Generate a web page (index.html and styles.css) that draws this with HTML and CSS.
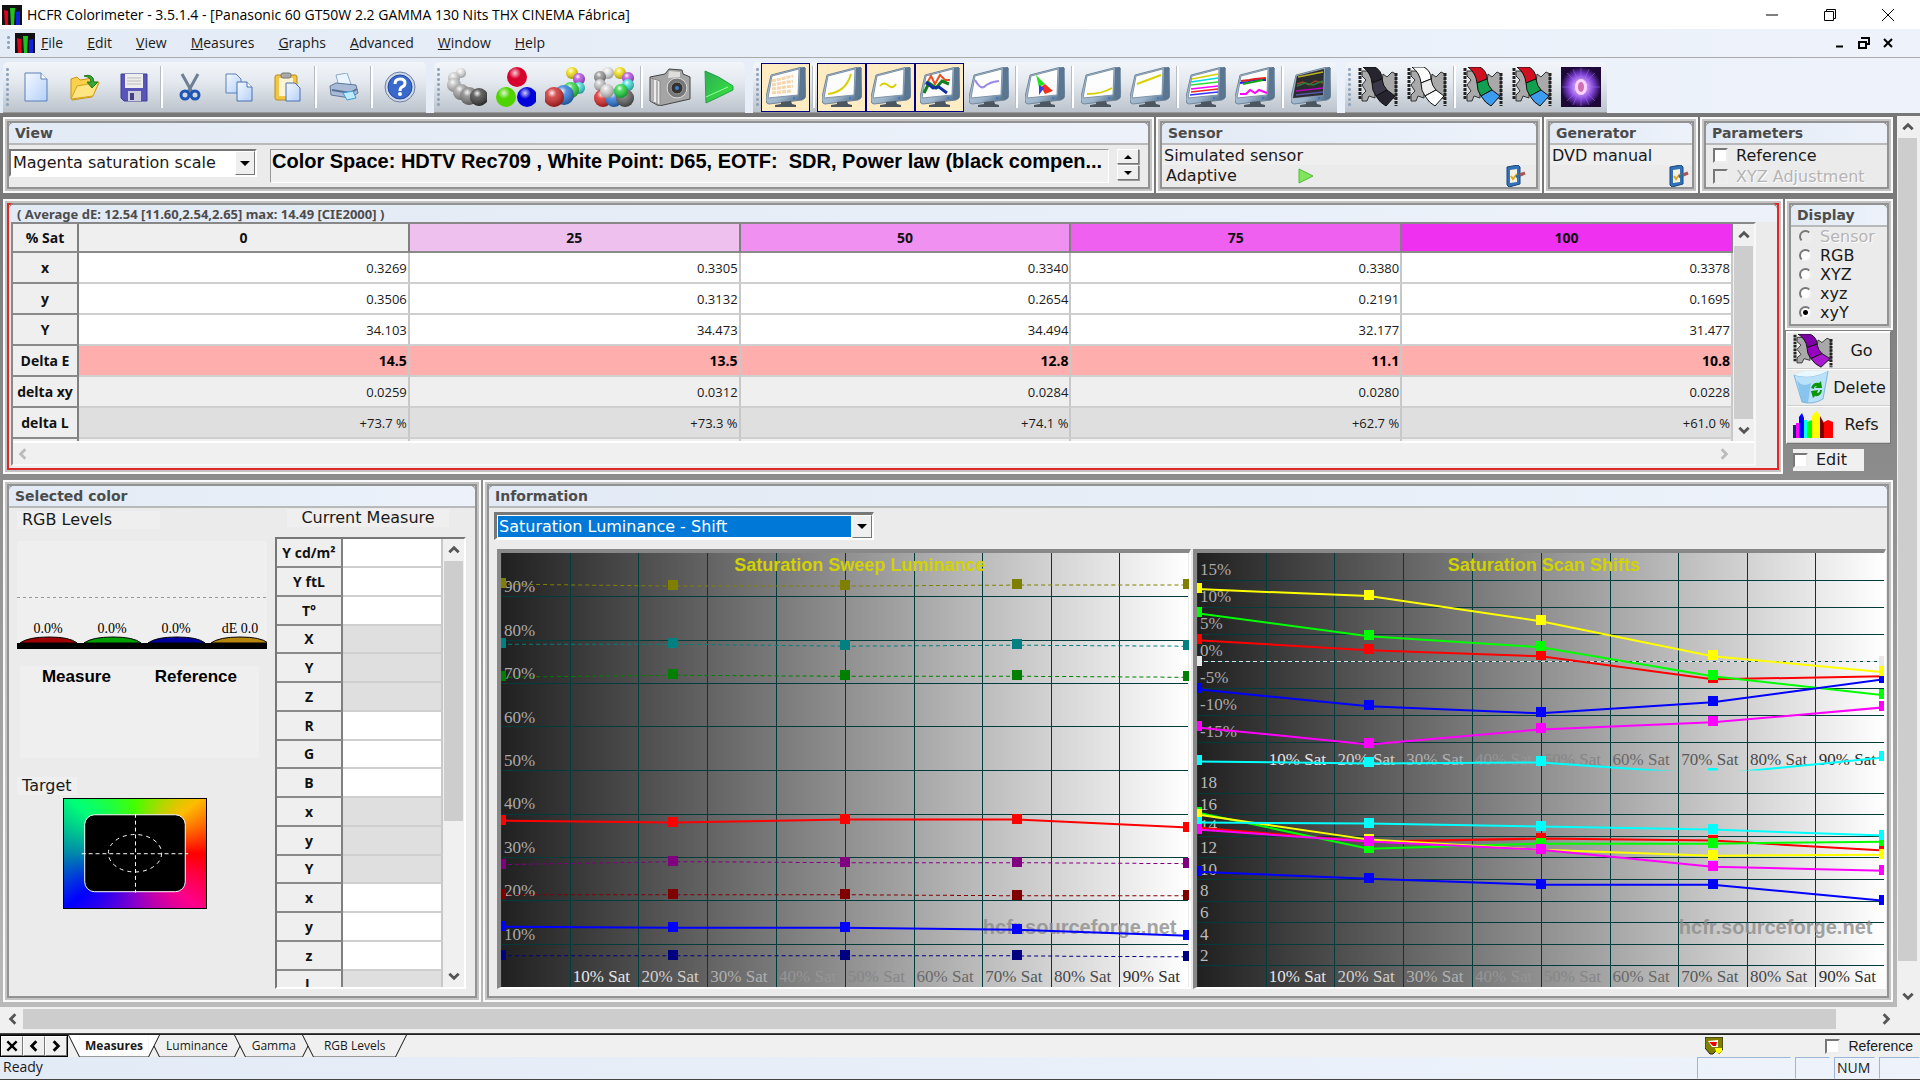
FILE: index.html
```html
<!DOCTYPE html>
<html lang="en">
<head>
    <meta charset="utf-8">
    <title>HCFR Colorimeter</title>
    <meta name="viewport" content="width=device-width, initial-scale=1">
    <link rel="stylesheet" href="styles.css">
</head>
<body>
    <svg class="defs" width="0" height="0" aria-hidden="true">
        <defs>
            <linearGradient id="gPage" x1="0" y1="0" x2="1" y2="1"><stop offset="0" stop-color="#f4f9ff"/><stop offset="1" stop-color="#b4d0fa"/></linearGradient>
            <linearGradient id="gFrame" x1="0" y1="0" x2="1" y2="1"><stop offset="0" stop-color="#c3d0dc"/><stop offset=".6" stop-color="#9db4ca"/><stop offset="1" stop-color="#33526f"/></linearGradient>
            <linearGradient id="gPlay" x1="0" y1="0" x2="1" y2="1"><stop offset="0" stop-color="#2fae55"/><stop offset="1" stop-color="#35e83c"/></linearGradient>
            <linearGradient id="gGray"><stop offset="0" stop-color="#202020"/><stop offset="1" stop-color="#fff"/></linearGradient>
            <radialGradient id="shine" cx=".4" cy=".3" r=".75"><stop offset="0" stop-color="#fff" stop-opacity=".95"/><stop offset=".3" stop-color="#fff" stop-opacity=".25"/><stop offset="1" stop-color="#000" stop-opacity=".35"/></radialGradient>
            <radialGradient id="shineFlat" cx=".4" cy=".3" r=".3"><stop offset="0" stop-color="#fff" stop-opacity=".8"/><stop offset="1" stop-color="#fff" stop-opacity="0"/></radialGradient>
            <radialGradient id="gStar"><stop offset="0" stop-color="#fff"/><stop offset=".25" stop-color="#d9a8ff"/><stop offset=".65" stop-color="#7a3fd0"/><stop offset="1" stop-color="#1d0838"/></radialGradient>
        </defs>
        <symbol id="logo" viewBox="0 0 20 20">
            <rect width="20" height="20" fill="#111"/>
            <path d="M2 5l4 1v14H3z" fill="#e00020"/><path d="M8 3h5l-1 17H9z" fill="#1ec41e"/><path d="M14 7l4-1v14h-4z" fill="#1020e0"/>
        </symbol>
        <symbol id="monitor" viewBox="0 0 40 40">
            <path d="M5 8L36 0q4 0 4 3v24q0 5-4 6L3 37q-3 0-3-4v-3z" fill="url(#gFrame)" stroke="#71879b"/>
            <path d="M6 9l27-7-1 26-30 3z" fill="#fdfdfd" stroke="#7f94a8"/>
            <path d="M34 1l5-1v28l-6 3z" fill="#5a7690"/>
            <circle cx="28" cy="31" r="1" fill="#2b6fd0"/>
            <path d="M15 35l10-1 1 3 4 1v2H9v-2l6-1z" fill="#4c5660"/>
        </symbol>
        <symbol id="film" viewBox="0 0 40 40">
            <path d="M4 4h6l2 4 5-2v9l4 3-4 4v9l-6-2-2 5H4v-6l4-4-4-6 4-5-4-4zM25 7l4 3 5-5 4 2v25l-6-2-4 4-4-5 3-7-3-6z" fill="#a9a9a9" stroke="#333"/>
            <path d="M2 1v32M38 6v33" stroke="#222" stroke-width="3" stroke-dasharray="3 1"/>
            <path class="f1" d="M5 0h12q7 4 7 12l-10 4Q13 6 5 0z" stroke="#111"/>
            <path class="f2" d="M14 16l10-4q1 7 5 11l-11 6q-4-5-4-13z" stroke="#111"/>
            <path class="f3" d="M18 29l11-6 8 6-9 10q-6-3-10-10z" stroke="#111"/>
        </symbol>
        <symbol id="props" viewBox="0 0 22 22">
            <path d="M2 2l11-2 2 2v17l-11 3-2-2z" fill="#3172b8" stroke="#1b4478"/><path d="M5 5l7-1v13l-7 1z" fill="#f6f2dd"/>
            <path d="M6 11l2 3 4-5" fill="none" stroke="#e2a723" stroke-width="2"/><path d="M11 12l6-3" stroke="#2d6aa8" stroke-width="3"/><path d="M15 10l5-2" stroke="#a55" stroke-width="3"/>
        </symbol>
        <symbol id="up" viewBox="0 0 12 12"><path d="M2 8l4-4 4 4" fill="none" stroke="currentColor" stroke-width="2.4"/></symbol>
        <symbol id="down" viewBox="0 0 12 12"><path d="M2 4l4 4 4-4" fill="none" stroke="currentColor" stroke-width="2.4"/></symbol>
        <symbol id="left" viewBox="0 0 12 12"><path d="M8 2L4 6l4 4" fill="none" stroke="currentColor" stroke-width="2.4"/></symbol>
        <symbol id="right" viewBox="0 0 12 12"><path d="M4 2l4 4-4 4" fill="none" stroke="currentColor" stroke-width="2.4"/></symbol>
    </svg>

    <header class="titlebar">
        <svg class="logo"><use href="#logo"/></svg>
        <span class="title">HCFR Colorimeter - 3.5.1.4 - [Panasonic 60 GT50W 2.2 GAMMA 130 Nits THX CINEMA Fábrica]</span>
        <button aria-label="Minimize"><svg width="12" height="12" viewBox="0 0 12 12"><path d="M0 6h12" stroke="#000"/></svg></button>
        <button aria-label="Restore"><svg width="12" height="12" viewBox="0 0 12 12"><path d="M.5 2.5h9v9h-9zM2.500 2V.5h9v9H10" fill="none" stroke="#000"/></svg></button>
        <button aria-label="Close"><svg width="12" height="12" viewBox="0 0 12 12"><path d="M0 0l12 12M12 0L0 12" stroke="#000"/></svg></button>
    </header>

    <nav class="menubar">
        <i class="grip"></i>
        <svg class="logo"><use href="#logo"/></svg>
        <div class="menus">
            <button><u>F</u>ile</button><button><u>E</u>dit</button><button><u>V</u>iew</button><button><u>M</u>easures</button><button><u>G</u>raphs</button><button><u>A</u>dvanced</button><button><u>W</u>indow</button><button><u>H</u>elp</button>
        </div>
        <div class="mdi">
            <button aria-label="Minimize document"><svg width="10" height="10" viewBox="0 0 10 10"><path d="M1 8.500h7" stroke="#000" stroke-width="2"/></svg></button>
            <button aria-label="Restore document"><svg width="12" height="12" viewBox="0 0 12 12"><path d="M3 1h8v6H9M1 5h7v6H1z" fill="none" stroke="#000" stroke-width="2"/></svg></button>
            <button aria-label="Close document"><svg width="10" height="10" viewBox="0 0 10 10"><path d="M1 1l8 8M9 1L1 9" stroke="#000" stroke-width="2"/></svg></button>
        </div>
    </nav>

    <div class="toolbars">
        <div class="toolbar">
            <i class="grip"></i>
            <button aria-label="New"><svg width="24" height="30" viewBox="0 0 24 30"><path d="M1 1h16l6 6v22H1z" fill="url(#gPage)" stroke="#5b7fb8"/><path d="M17 1v6h6" fill="#fff" stroke="#5b7fb8"/></svg></button>
            <button aria-label="Open"><svg width="30" height="28" viewBox="0 0 30 28"><path d="M1 25V6l6-2 3 3 13-2v6l6-1-7 14-20 3z" fill="#fbd04a" stroke="#c99415"/><path d="M1 26l6-13 22-4-6 14z" fill="#ffe682" stroke="#d3a11f"/><path d="M14 3q9-3 10 6h4l-6 6-5-6h4q0-5-7-6z" fill="#37a637" stroke="#1d7a1d"/></svg></button>
            <button aria-label="Save"><svg width="28" height="29" viewBox="0 0 28 29"><path d="M1 1h26v27H4l-3-3z" fill="#5955b8" stroke="#3f3c91"/><path d="M5 1h18v14H5z" fill="#eee"/><path d="M7 5h14M7 8h14M7 11h14" stroke="#bbb"/><path d="M8 18h13v10H8z" fill="#ccd"/><path d="M10 20h4v7h-4z" fill="#444086"/></svg></button>
            <i class="sep"></i>
            <button aria-label="Cut"><svg width="22" height="28" viewBox="0 0 22 28"><path d="M3 1l10 18M19 1L9 19" stroke="#6f7f93" stroke-width="3"/><circle cx="6" cy="22" r="4" fill="none" stroke="#1e56b8" stroke-width="3"/><circle cx="16" cy="22" r="4" fill="none" stroke="#1e56b8" stroke-width="3"/></svg></button>
            <button aria-label="Copy"><svg width="28" height="29" viewBox="0 0 28 29"><path d="M1 1h10l5 5v14H1z" fill="url(#gPage)" stroke="#5b7fb8"/><path d="M12 9h10l5 5v14H12z" fill="url(#gPage)" stroke="#4a70b0"/><path d="M22 9v5h5" fill="#fff" stroke="#4a70b0"/></svg></button>
            <button aria-label="Paste"><svg width="28" height="30" viewBox="0 0 28 30"><rect x="1" y="3" width="22" height="25" rx="2" fill="#f2c545" stroke="#b98a1a"/><path d="M5 6h14v18H5z" fill="#fdf4d4"/><rect x="7" y="1" width="10" height="5" rx="2" fill="#aaa" stroke="#777"/><path d="M12 11h9l5 5v13H12z" fill="url(#gPage)" stroke="#4a70b0"/></svg></button>
            <i class="sep"></i>
            <button aria-label="Print"><svg width="30" height="28" viewBox="0 0 30 28"><path d="M7 2l11-2 4 11-12 3z" fill="#eaf5ff" stroke="#8fa8c8"/><path d="M1 13l6-3 20 2 2 8-8 5-19-3z" fill="#a9bbd6" stroke="#5f7699"/><path d="M3 17l18 3 7-4" fill="none" stroke="#5a6f92" stroke-width="2"/><path d="M14 20l10-2 3 7-9 2z" fill="#bdeaff" stroke="#3c9ad8"/></svg></button>
            <i class="sep"></i>
            <button aria-label="Help"><svg width="32" height="32" viewBox="0 0 32 32"><circle cx="16" cy="16" r="15" fill="#cfd8e8" stroke="#6d7fa3"/><circle cx="16" cy="16" r="12" fill="#3a69cc" stroke="#2448a0"/><path d="M11 13q0-5 5-5t5 4q0 3-3 4-2 1-2 4" fill="none" stroke="#fff" stroke-width="3"/><circle cx="16" cy="23" r="2" fill="#fff"/></svg></button>
        </div>
        <div class="toolbar">
            <i class="grip"></i>
            <button aria-label="Grayscale"><svg class="balls" data-balls="14,6,5,#ddd 7,11,6,#ccc 7,18,7,#bbb 14,25,8,#999 22,29,9,#777 32,30,9,#333" viewBox="0 0 40 40"></svg></button>
            <button aria-label="Primaries"><svg class="balls flat" data-balls="21,10,10,#d8002c 10,30,10,#4fd400 31,30,10,#0000d8" viewBox="0 0 40 40"></svg></button>
            <button aria-label="Secondaries"><svg class="balls" data-balls="27,6,6,#f5dc00 34,12,6,#b040e0 34,21,6,#30d8d8 26,23,8,#20d030 19,28,10,#2070d8 9,30,10,#c81818" viewBox="0 0 40 40"></svg></button>
            <button aria-label="All measures"><svg class="balls" data-balls="14,6,6,#ddd 26,6,6,#f5dc00 6,10,6,#888 34,11,6,#b040e0 6,18,6,#bbb 34,18,6,#30d8d8 9,31,9,#d81818 20,31,9,#2070d8 31,31,9,#555 13,24,7,#ccc 27,24,7,#10d030" viewBox="0 0 40 40"></svg></button>
            <i class="sep"></i>
            <button aria-label="Snapshot"><svg width="42" height="38" viewBox="0 0 42 38"><path d="M1 9L16 6l4-5 13 1 1 4 7 3v22l-31 7-9-5z" fill="#a5a5a5" stroke="#444"/><path d="M2 10l9 3v24l-9-4z" fill="#ececec" stroke="#888"/><path d="M4 11v22M8 13v22" stroke="#777"/><path d="M20 3l11 1v5l-12 1z" fill="#ddd"/><circle cx="28" cy="20" r="10" fill="#777" stroke="#ddd"/><circle cx="28" cy="20" r="6" fill="#333" stroke="#999"/><circle cx="28" cy="20" r="2" fill="#3c7fd0"/></svg></button>
            <button aria-label="Run"><svg width="30" height="34" viewBox="0 0 30 34"><path d="M1 1q14 5 28 15v4Q15 27 2 33z" fill="url(#gPlay)" stroke="#2a9e48"/><path d="M2 27l22-10" stroke="#9f9" /></svg></button>
        </div>
        <div class="toolbar">
            <i class="grip"></i>
            <button class="on" aria-label="Measures view"><svg viewBox="0 0 40 40"><use href="#monitor"/><path d="M6 14l21-5M6 18l21-4M6 22l21-3M6 26l20-2" stroke="#f6d6aa" stroke-width="3" stroke-dasharray="4 1"/></svg></button>
            <i class="sep"></i>
            <button class="on" aria-label="Luminance"><svg viewBox="0 0 40 40"><use href="#monitor"/><path d="M6 27q18-2 23-20" fill="none" stroke="#d8d000" stroke-width="2"/></svg></button>
            <button class="on" aria-label="Gamma"><svg viewBox="0 0 40 40"><use href="#monitor"/><path d="M9 19q4-5 9 0 4 3 7-2" fill="none" stroke="#d8d000" stroke-width="2"/></svg></button>
            <button class="on" aria-label="RGB levels"><svg viewBox="0 0 40 40"><use href="#monitor"/><path d="M6 18l5-9 4 8 5-9 5 5h5" fill="none" stroke="#f05020" stroke-width="2"/><path d="M4 26l5-10 7 5 6-7 7 3" fill="none" stroke="#108020" stroke-width="3"/><path d="M6 15l7 6 6-1 8 6" fill="none" stroke="#1030a0" stroke-width="3"/></svg></button>
            <button aria-label="Temperature"><svg viewBox="0 0 40 40"><use href="#monitor"/><path d="M6 13q5 9 9 7 5-5 15-6" fill="none" stroke="#9a8ae8" stroke-width="2"/></svg></button>
            <i class="sep"></i>
            <button aria-label="CIE diagram"><svg viewBox="0 0 40 40"><use href="#monitor"/><path d="M11 8l9 9-6 3z" fill="#20e020"/><path d="M20 17l8 7-8 3-4-7z" fill="#f03020"/><path d="M14 18l5 3-5 7z" fill="#3040f0"/></svg></button>
            <i class="sep"></i>
            <button aria-label="Near black"><svg viewBox="0 0 40 40"><use href="#monitor"/><path d="M6 27q15 0 25-6" fill="none" stroke="#d8d000" stroke-width="2"/></svg></button>
            <button aria-label="Near white"><svg viewBox="0 0 40 40"><use href="#monitor"/><path d="M7 17l24-9" fill="none" stroke="#d8d000" stroke-width="2"/></svg></button>
            <i class="sep"></i>
            <button aria-label="Saturation luminance"><svg viewBox="0 0 40 40"><use href="#monitor"/><g stroke-width="1.500"><path d="M6 12l26-5" stroke="#d8d000"/><path d="M5 15l27-4" stroke="#0dd"/><path d="M5 18l27-3" stroke="#3d3"/><path d="M5 22l27-3" stroke="#f0f"/><path d="M5 25l27-3" stroke="#e22"/><path d="M4 28l28-3" stroke="#33f"/></g></svg></button>
            <button aria-label="Saturation shift"><svg viewBox="0 0 40 40"><use href="#monitor"/><g fill="none" stroke-width="2"><path d="M5 16l8-1 4-2h14" stroke="#22e"/><path d="M6 14l8-1 6-1 11-1" stroke="#e02020"/><path d="M8 17l20-4" stroke="#1a1"/><path d="M5 27h6l4-4 5 3 4-3 8 3" stroke="#f0f"/></g></svg></button>
            <i class="sep"></i>
            <button aria-label="Measures combo"><svg viewBox="0 0 40 40"><use href="#monitor"/><path d="M6 9l27-7-1 26-30 3z" fill="#2c2c30"/><g fill="none" stroke-width="1.500"><path d="M7 10l25-5" stroke="#b8b020"/><path d="M6 17l6-2 6 3 6-4 8 2" stroke="#a04020"/><path d="M6 19l8-3 8 2 10-4" stroke="#208040"/><path d="M5 24l27-3" stroke="#b0b"/><path d="M5 28l27-3" stroke="#55a"/></g></svg></button>
        </div>
        <div class="toolbar">
            <i class="grip"></i>
            <button aria-label="Film black"><svg class="film-black" viewBox="0 0 40 40"><use href="#film"/></svg></button>
            <button aria-label="Film white"><svg class="film-white" viewBox="0 0 40 40"><use href="#film"/></svg></button>
            <i class="sep"></i>
            <button aria-label="Film primaries"><svg class="film-rgb" viewBox="0 0 40 40"><use href="#film"/></svg></button>
            <button aria-label="Film secondaries"><svg class="film-rgb" viewBox="0 0 40 40"><use href="#film"/></svg></button>
            <button aria-label="Contrast"><svg viewBox="0 0 40 40"><rect width="40" height="40" fill="#1d0838"/><circle cx="20" cy="20" r="20" fill="url(#gStar)"/><path d="M20 1v38M1 20h38M6 6l28 28M34 6L6 34M12 2l16 36M28 2L12 38" stroke="#a36bff" stroke-opacity=".5"/><ellipse cx="20" cy="20" rx="6" ry="8" fill="#fbd4ff"/><ellipse cx="20" cy="20" rx="3" ry="5" fill="#d070b0"/></svg></button>
        </div>
    </div>

    <div class="workspace">
        <main>
            <div class="row">
                <section class="panel grow"><div class="inner">
                    <h2>View</h2>
                    <div class="viewbar">
                        <div class="combo"><select aria-label="View"><option>Magenta saturation scale</option></select><span class="drop"></span></div>
                        <p class="space">Color Space: HDTV Rec709 , White Point: D65, EOTF: &nbsp;SDR, Power law (black compen...</p>
                        <div class="spin"><button aria-label="Previous" class="tri-up"></button><button aria-label="Next" class="tri-down"></button></div>
                    </div>
                </div></section>
                <section class="panel sensor"><div class="inner">
                    <h2>Sensor</h2>
                    <p>Simulated sensor</p>
                    <div class="line"><span>Adaptive</span><svg class="go" width="16" height="16" viewBox="0 0 16 16"><path d="M1 1l14 7-14 7z" fill="#7fe85a" stroke="#4fb838"/></svg><button aria-label="Sensor properties"><svg width="22" height="22"><use href="#props"/></svg></button></div>
                </div></section>
                <section class="panel generator"><div class="inner">
                    <h2>Generator</h2>
                    <p>DVD manual</p>
                    <div class="line"><button aria-label="Generator properties"><svg width="22" height="22"><use href="#props"/></svg></button></div>
                </div></section>
                <section class="panel params"><div class="inner">
                    <h2>Parameters</h2>
                    <label><input type="checkbox"> Reference</label>
                    <label class="off"><input type="checkbox" disabled> XYZ Adjustment</label>
                </div></section>
            </div>

            <div class="row">
                <section class="panel grow results"><div class="inner">
                    <h2>( Average dE: 12.54 [11.60,2.54,2.65] max: 14.49 [CIE2000] )</h2>
                    <div class="gridbox">
                        <div class="gridview">
                            <table>
                                <tr><th>% Sat</th><th class="s0">0</th><th class="s25">25</th><th class="s50">50</th><th class="s75">75</th><th class="s100">100</th></tr>
                                <tr><th>x</th><td>0.3269</td><td>0.3305</td><td>0.3340</td><td>0.3380</td><td>0.3378</td></tr>
                                <tr><th>y</th><td>0.3506</td><td>0.3132</td><td>0.2654</td><td>0.2191</td><td>0.1695</td></tr>
                                <tr><th>Y</th><td>34.103</td><td>34.473</td><td>34.494</td><td>32.177</td><td>31.477</td></tr>
                                <tr class="de"><th>Delta E</th><td>14.5</td><td>13.5</td><td>12.8</td><td>11.1</td><td>10.8</td></tr>
                                <tr class="light"><th>delta xy</th><td>0.0259</td><td>0.0312</td><td>0.0284</td><td>0.0280</td><td>0.0228</td></tr>
                                <tr class="dark"><th>delta L</th><td>+73.7 %</td><td>+73.3 %</td><td>+74.1 %</td><td>+62.7 %</td><td>+61.0 %</td></tr>
                                <tr class="light"><th></th><td></td><td></td><td></td><td></td><td></td></tr>
                            </table>
                            <div class="vscroll">
                                <button aria-label="Scroll up"><svg><use href="#up"/></svg></button><i class="thumb"></i><button aria-label="Scroll down"><svg><use href="#down"/></svg></button>
                            </div>
                        </div>
                        <div class="hscroll idle">
                            <button aria-label="Scroll left"><svg><use href="#left"/></svg></button><i class="fill"></i><button aria-label="Scroll right"><svg><use href="#right"/></svg></button>
                        </div>
                    </div>
                </div></section>
                <aside>
                    <section class="panel display"><div class="inner">
                        <h2>Display</h2>
                        <label class="off"><input type="radio" name="disp" disabled> Sensor</label>
                        <label><input type="radio" name="disp"> RGB</label>
                        <label><input type="radio" name="disp"> XYZ</label>
                        <label><input type="radio" name="disp"> xyz</label>
                        <label><input type="radio" name="disp" checked> xyY</label>
                    </div></section>
                    <div class="actions">
                        <button><svg class="film-purple" width="40" height="34" viewBox="0 0 40 40" preserveAspectRatio="none"><use href="#film"/></svg><span>Go</span></button>
                        <button><svg width="36" height="33" viewBox="0 0 36 33"><path d="M1 4q17 5 34-4l-5 28q-10 6-21 3z" fill="#b9e2fa" stroke="#7fb6dc"/><path d="M1 4q17-8 34-4-17 9-34 4z" fill="#e9f8ff"/><path d="M4 9q5 8 14 3l-3 20-6-1z" fill="#68b0ea" opacity=".6"/><path d="M18 17q2-6 8-5l2-2 1 7h-7l2-2q-3 0-3 3zM29 19q-1 7-7 6l-2 2-2-7 7-1-1 3q3 0 3-3z" fill="#0a960a"/></svg><span>Delete</span></button>
                        <button><svg width="40" height="27" viewBox="0 0 40 27"><path d="M0 27V14h3v13" fill="#202080"/><path d="M3 27V12h3v15" fill="#f0f"/><path d="M6 27V6l3-4 2 5v20" fill="#00f"/><path d="M11 27V9h3v18" fill="#0ff"/><path d="M14 27V11l5-2v18" fill="#0f0"/><path d="M19 27V5l4-5 4 4v23" fill="#ff0"/><path d="M27 27V5l4 7v15" fill="#700"/><path d="M31 27V11l4-2 5 2v16" fill="#f00"/></svg><span>Refs</span></button>
                    </div>
                    <label class="edit"><input type="checkbox"> Edit</label>
                </aside>
            </div>

            <div class="row grow">
                <section class="panel selected"><div class="inner">
                    <h2>Selected color</h2>
                    <div class="cols">
                        <div class="levels">
                            <h3 class="rgb">RGB Levels</h3>
                            <svg class="bars" viewBox="0 0 250 108">
                                <path d="M0 56.500h250" stroke="#999" stroke-dasharray="3 3"/>
                                <g stroke="#000"><path d="M3 102q8-6 29-6t28 6z" fill="#a00000"/><path d="M67 102q8-6 29-6t28 6z" fill="#00a000"/><path d="M131 102q8-6 29-6t28 6z" fill="#0000a0"/><path d="M194 102q8-6 29-6t28 6z" fill="#b8860b"/></g>
                                <rect y="102" width="250" height="6"/>
                                <g text-anchor="middle"><text x="31" y="92">0.0%</text><text x="95" y="92">0.0%</text><text x="159" y="92">0.0%</text><text x="223" y="92">dE 0.0</text></g>
                            </svg>
                            <div class="compare"><b>Measure</b><b>Reference</b></div>
                            <h3 class="tgt">Target</h3>
                            <div class="target"><svg viewBox="0 0 144 111"><rect x="21" y="16" width="102" height="78" rx="10" stroke="#fff"/><path d="M18 55.500h108M72.500 15v80" stroke="#fff" stroke-dasharray="4 3"/><ellipse cx="72" cy="55" rx="27" ry="19" fill="none" stroke="#fff" stroke-dasharray="4 4"/></svg></div>
                        </div>
                        <div class="current">
                            <h3>Current Measure</h3>
                            <div class="measurebox">
                                <table>
                                    <tr><th>Y cd/m²</th><td></td></tr>
                                    <tr><th>Y ftL</th><td></td></tr>
                                    <tr><th>T°</th><td></td></tr>
                                    <tr class="dark"><th>X</th><td></td></tr>
                                    <tr class="dark"><th>Y</th><td></td></tr>
                                    <tr class="dark"><th>Z</th><td></td></tr>
                                    <tr><th>R</th><td></td></tr>
                                    <tr><th>G</th><td></td></tr>
                                    <tr><th>B</th><td></td></tr>
                                    <tr class="dark"><th>x</th><td></td></tr>
                                    <tr class="dark"><th>y</th><td></td></tr>
                                    <tr class="dark"><th>Y</th><td></td></tr>
                                    <tr><th>x</th><td></td></tr>
                                    <tr><th>y</th><td></td></tr>
                                    <tr><th>z</th><td></td></tr>
                                    <tr class="dark"><th>L</th><td></td></tr>
                                </table>
                                <div class="vscroll part">
                                    <button aria-label="Scroll up"><svg><use href="#up"/></svg></button><i class="thumb"></i><i class="rest"></i><button aria-label="Scroll down"><svg><use href="#down"/></svg></button>
                                </div>
                            </div>
                        </div>
                    </div>
                </div></section>
                <section class="panel grow info"><div class="inner">
                    <h2>Information</h2>
                    <div class="combo wide"><select aria-label="Information"><option>Saturation Luminance - Shift</option></select><span class="drop"></span></div>
                    <div class="charts">
                        <div class="frame"><svg id="luminance" viewBox="0 0 686 433"></svg></div>
                        <div class="frame"><svg id="shifts" viewBox="0 0 686 433"></svg></div>
                    </div>
                </div></section>
            </div>
        </main>
        <div class="vscroll page">
            <button aria-label="Scroll up"><svg><use href="#up"/></svg></button><i class="thumb"></i><i class="rest"></i><button aria-label="Scroll down"><svg><use href="#down"/></svg></button>
        </div>
    </div>

    <div class="hscroll page">
        <button aria-label="Scroll left"><svg><use href="#left"/></svg></button><i class="thumb"></i><i class="rest"></i><button aria-label="Scroll right"><svg><use href="#right"/></svg></button>
    </div>

    <div class="tabbar">
        <div class="nav">
            <button aria-label="Close tab"><svg viewBox="0 0 12 12"><path d="M2 2l8 8M10 2l-8 8" stroke="#000" stroke-width="2"/></svg></button>
            <button aria-label="Previous tab"><svg><use href="#left"/></svg></button>
            <button aria-label="Next tab"><svg><use href="#right"/></svg></button>
        </div>
        <svg class="edge" viewBox="0 0 12 24"><path d="M0 0h12v24z" fill="#fff"/><path d="M0 0l12 24" stroke="#000"/></svg>
        <button class="tab active">Measures</button>
        <svg class="edge" viewBox="0 0 12 24"><path d="M0 0h12L0 24z" fill="#fff"/><path d="M12 0L0 24M6 12l6 12" stroke="#000"/></svg>
        <button class="tab">Luminance</button>
        <svg class="edge" viewBox="0 0 12 24"><path d="M0 0l12 24M6 12L0 24" stroke="#000"/></svg>
        <button class="tab">Gamma</button>
        <svg class="edge" viewBox="0 0 12 24"><path d="M0 0l12 24M6 12L0 24" stroke="#000"/></svg>
        <button class="tab last">RGB Levels</button>
        <svg class="edge" viewBox="0 0 12 24"><path d="M12 0L0 24" stroke="#000"/></svg>
        <i class="fill"></i>
        <svg class="badge" viewBox="0 0 18 18"><path d="M0 0h18v12l-4 5-3-3-3 3H5l-5-6z" fill="#808000" stroke="#222"/><path d="M3 4l10-1v7H7z" fill="#fff"/><path d="M4 5h8l-1 4H8z" fill="#e00"/><path d="M10 11h7v3l-3 3-3-2z" fill="#ff0"/></svg>
        <label><input type="checkbox"> Reference</label>
    </div>

    <footer class="status"><span class="ready">Ready</span><span class="c1"></span><span class="c2"></span><span class="c3">NUM</span><span class="c4"></span></footer>

    <script src="charts.js"></script>
</body>
</html>
```
FILE: styles.css
```css
* { box-sizing: border-box; }
body { margin: 0; min-height: 100vh; display: flex; flex-direction: column; font: 16px/18px "DejaVu Sans", sans-serif; color: #1a1a1a; background: #f0f0f0; border-bottom: 2px solid #444; }
button { font: inherit; color: inherit; border: 0; padding: 0; background: none; display: flex; align-items: center; justify-content: center; }
h2, h3, p { margin: 0; font-weight: normal; font-size: inherit; }
i { display: block; }
svg { display: block; }
.defs { position: absolute; }
.grow { flex: 1; }
.fill { flex: 1; }

/* title and menu */
.titlebar { height: 29px; background: #fff; display: flex; align-items: center; font: 14px/18px "Open Sans", sans-serif; color: #000; padding: 0 3px 0 2px; }
.titlebar .title { flex: 1; padding-left: 5px; }
.titlebar button { width: 58px; height: 29px; }
.logo { width: 20px; height: 20px; }
.menubar { height: 29px; background: linear-gradient(90deg, #e3ebf6, #eef3fb); border-bottom: 1px solid #aaa; display: flex; align-items: center; font: 14px/20px "Open Sans", sans-serif; padding-left: 4px; }
.menubar .grip { height: 16px; margin-right: 3px; }
.menus { flex: 1; display: flex; gap: 24px; padding-left: 6px; }
.mdi { display: flex; gap: 2px; padding-right: 21px; }
.mdi button { width: 22px; height: 20px; }
.grip { width: 8px; height: 40px; background: radial-gradient(circle, #8ea3bd 1px, transparent 2px) 2px 0 / 5px 5px repeat-y; }

/* toolbars */
.toolbars { display: flex; gap: 8px; padding: 4px 3px 0; height: 55px; background: linear-gradient(90deg, #e3ebf6, #eef3fb); }
.toolbar { display: flex; align-items: center; padding-right: 2px; border-radius: 5px 5px 0 0; background: linear-gradient(#f2f6fb, #e4e9ef 40%, #bcc3cc); border-bottom: 1px solid #999; }
.toolbar button { width: 49px; height: 49px; }
.toolbar button.on { background: #ffecc2; border: 1px solid #000080; }
.toolbar svg[viewBox="0 0 40 40"] { width: 40px; height: 40px; }
.sep { width: 7px; height: 42px; border-left: 2px solid transparent; background: linear-gradient(90deg, #b5bcc6 1px, #fff 1px, #fff 3px, transparent 3px); background-clip: padding-box; }
.film-black { --a: #26242e; --b: #3a3848; --c: #26242e; }
.film-white { --a: #fff; --b: #eee; --c: #fff; }
.film-rgb { --a: #d01020; --b: #10a050; --c: #3b9cf0; }
.film-purple { --a: #8000a8; --b: #9a00c4; --c: #a81ad0; }
.f1 { fill: var(--a); }
.f2 { fill: var(--b); }
.f3 { fill: var(--c); }

/* workspace and panels */
.workspace { flex: 1; display: flex; border-top: 3px solid #777; background: linear-gradient(#747474, #8c8c8c 40%, #bababa); }
main { flex: 1; min-width: 0; display: flex; flex-direction: column; gap: 6px; padding: 1px 4px 5px 3px; }
.row { display: flex; gap: 2px; }
.panel { border: 2px solid #fafafa; background: #c4c4c4; padding: 2px; min-width: 0; display: flex; }
.inner { flex: 1; min-width: 0; border: 2px solid #929292; background: #ebebeb; }
.inner h2 { height: 22px; line-height: 20px; padding-left: 6px; font-size: 14px; font-weight: bold; color: #4c4c4c; background: linear-gradient(90deg, #e2eaf5, #edf2fa); border-bottom: 2px solid #b9b9b9; border-radius: 5px 5px 0 0; box-shadow: 0 -2px #929292; }
.sensor { width: 386px; }
.generator { width: 154px; }
.params { width: 193px; }
.viewbar { display: flex; height: 42px; padding-top: 4px; }
.combo { display: flex; width: 248px; height: 28px; background: #fff; border: 2px solid #777; border-color: #777 #fff #fff #777; }
.combo select { flex: 1; min-width: 0; appearance: none; border: 0; background: none; font: inherit; color: inherit; padding: 0 2px; }
.drop { width: 20px; background: #efefef; border: 1px solid; border-color: #fff #777 #777 #fff; display: flex; align-items: center; justify-content: center; }
.drop::after, .tri-down::after { content: ""; border: 5px solid transparent; border-top-color: #000; border-bottom: 0; }
.tri-up::after { content: ""; border: 4px solid transparent; border-bottom-color: #000; border-top: 0; }
.tri-down::after { border-width: 4px 4px 0; }
.space { flex: 1; min-width: 0; overflow: hidden; white-space: nowrap; margin: 0 8px 4px 13px; padding: 0 0 0 1px; border: 1px solid; border-color: #999 #fff #fff #999; background: #f0f0f0; font: bold 20px/22px "Liberation Sans", Arial, sans-serif; color: #000; }
.spin { width: 22px; margin-right: 9px; display: flex; flex-direction: column; gap: 1px; }
.spin button { height: 15px; background: #efefef; border: 1px solid; border-color: #fff #777 #777 #fff; box-shadow: 1px 1px #999; }
.inner > p { padding: 2px 2px 0; background: #efefef; }
.line { display: flex; padding: 0 9px 0 4px; height: 22px; align-items: center; }
.line span { width: 132px; }
.line button { margin-left: auto; }
.generator .line { padding-right: 2px; }
label { display: flex; align-items: center; gap: 8px; color: #1a1a1a; }
.off { color: #b4b4b4; text-shadow: 1px 1px #fff; }
input { margin: 0; flex: none; appearance: none; background: #fff; border: 2px solid; border-color: #777 #eee #eee #777; width: 15px; height: 15px; }
input:disabled { background: #ececec; }
.params label { height: 21px; padding-left: 7px; white-space: nowrap; }
input[type="radio"] { width: 13px; height: 13px; border-radius: 50%; }
input[type="radio"]:checked { background: radial-gradient(circle, #000 2px, #fff 3px); }

/* results grid */
.results .inner { border-color: #e02828; }
.results .inner h2 { height: 17px; font: bold 13px/18px "Noto Sans", sans-serif; padding-left: 8px; border: 0; }
.gridbox { margin: 0 21px 2px 2px; border: 2px solid; border-color: #888 #f8f8f8 #f8f8f8 #888; background: #f0f0f0; }
.gridview { display: flex; height: 219px; overflow: hidden; border-bottom: 2px solid #fff; }
table { border-collapse: separate; border-spacing: 0; table-layout: fixed; font: 14px/18px "Open Sans", sans-serif; }
.gridview table { flex: 1; width: 100%; align-self: flex-start; }
.gridview tr { height: 31px; }
.gridview tr:first-child { height: 29px; }
th { width: 66px; padding: 0; background: #efefef; border-right: 2px solid #808080; border-bottom: 2px solid #8a8a8a; color: #111; font-weight: bold; }
td { padding: 0 1px 0 0; text-align: right; background: #fff; border-right: 2px solid #c8c8c8; border-bottom: 2px solid #cfcfcf; font-size: 13px; }
.gridview tr:first-child th + th { width: auto; }
.gridview th.s25 { background: #eec0ee; }
.gridview th.s50 { background: #f090f0; }
.gridview th.s75 { background: #f060f0; }
.gridview th.s100 { background: #f030f0; }
.de td { background: #ffaeae; font-weight: bold; font-size: 14px; color: #000; }
.light td { background: #efefef; }
.dark td { background: #dfdfdf; }

/* scroll bars */
.vscroll { width: 21px; display: flex; flex-direction: column; background: #f0f0f0; padding: 0 1px; color: #555; }
.vscroll button { height: 22px; }
.vscroll svg, .hscroll svg, .nav svg { width: 14px; height: 14px; }
.thumb { flex: 1; background: #cdcdcd; }
.hscroll { display: flex; height: 20px; background: #f0f0f0; color: #555; }
.hscroll button { width: 20px; }
.idle { height: 21px; color: #bbb; }
.idle button:last-child { margin-right: 20px; }
.part .rest { height: 144px; }
.vscroll.page { width: 23px; padding-right: 3px; }
.vscroll.page .rest { height: 24px; }
.hscroll.page { height: 27px; padding: 2px 24px 4px 3px; border-bottom: 1px solid #444; }
.hscroll.page .rest { width: 40px; }

/* right column */
aside { width: 108px; }
.display label { height: 19px; padding-left: 8px; }
.display .inner { padding-bottom: 2px; }
.actions { margin: 1px 2px 5px 1px; border: 1px solid; border-color: #fff #777 #777 #fff; }
.actions button { width: 100%; height: 37px; background: #ebebeb; border-bottom: 1px solid #ccc; border-top: 1px solid #fff; justify-content: flex-start; padding-left: 6px; }
.actions span { flex: 1; text-align: center; }
.edit { width: 71px; height: 22px; margin-left: 8px; background: #f0f0f0; }

/* selected color */
.selected { width: 478px; }
.cols { display: flex; padding: 3px 9px 7px 8px; gap: 8px; }
.levels { width: 250px; }
h3 { background: #efefef; padding: 0 5px; }
.rgb { width: 143px; margin: 0 0 12px; }
.levels h3 { padding-left: 5px; }
.bars { width: 250px; height: 108px; background: #efefef; font: bold 14px "Liberation Serif", serif; }
.bars text { font-weight: normal; }
.compare { height: 92px; margin: 17px 8px 19px 3px; background: #efefef; display: flex; justify-content: space-around; font: 17px/22px "Liberation Sans", Arial, sans-serif; color: #000; }
.tgt { width: 60px; margin-bottom: 3px; }
.target { width: 144px; height: 111px; margin-left: 46px; border: 1px solid #000; background: conic-gradient(#4f0, #fb0 50deg, #f00 90deg, #f08 130deg, #80c 180deg, #00f 232deg, #08a 270deg, #0f7 310deg, #4f0); }
.current { flex: 1; }
.current h3 { margin: -2px 17px 10px 12px; padding: 0; text-align: center; white-space: nowrap; }
.measurebox { display: flex; height: 452px; overflow: hidden; border: 2px solid; border-color: #777 #fff #fff #777; }
.measurebox table { flex: 1; width: 100%; align-self: flex-start; }
.measurebox tr { height: 29px; }
.measurebox tr:nth-child(4n) { height: 28px; }

/* information */
.combo.wide { width: 380px; margin: 4px 0 9px 5px; border-width: 3px 2px 2px 3px; }
.wide select { background: #0078d7; color: #fff; border: 1px solid #fff; padding: 0 1px; }
.charts { display: flex; gap: 2px; padding: 0 1px 4px 8px; }
.frame { flex: 1; border: 4px solid; border-width: 4px 2px 2px 4px; border-color: #888 #fff #fff #888; }
.frame svg { width: 100%; }
.frame path, .frame rect { shape-rendering: crispEdges; }
.frame text { font: 17px "Liberation Serif", serif; }
.frame .head { font: bold 18px "Liberation Sans", Arial, sans-serif; }
.frame .mark { font: bold 20px "Liberation Sans", Arial, sans-serif; }
.head { fill: #d2d200; text-anchor: middle; }
.mark { fill: #8c8c8c; fill-opacity: .8; text-anchor: end; }

/* tabs and status */
.tabbar { height: 23px; display: flex; align-items: stretch; font: 12px/20px "Open Sans", sans-serif; border-top: 1px solid #222; }
.nav { display: flex; border: 1px solid #000; width: 68px; color: #000; }
.nav button { flex: 1; border: 1px solid; border-color: #fff #777 #777 #fff; }
.edge { width: 12px; height: 22px; }
.tab { border-bottom: 1px solid #999; padding: 0 6px; }
.tab.active { background: #fff; font-weight: bold; padding: 0 5px; }
.tab.last { padding: 0 10px; }
.badge { width: 18px; height: 18px; margin: 2px 102px 0 0; }
.tabbar label { font: 14px/16px "Liberation Sans", Arial, sans-serif; padding-right: 7px; gap: 8px; }
.status { height: 22px; display: flex; gap: 4px; background: linear-gradient(90deg, #e3ebf6, #eef3fb); font: 14px/20px "Open Sans", sans-serif; padding-left: 3px; }
.status span { border: 1px solid; border-color: #9db6d8 transparent transparent #9db6d8; padding-left: 2px; }
.status .ready { flex: 1; border: 0; padding: 0; }
.c1 { width: 94px; }
.c2 { width: 35px; }
.c3 { width: 41px; }
.c4 { width: 41px; }
```
FILE: charts.js
```js
const NS = "http://www.w3.org/2000/svg";
const W = 686, H = 433;

function add(parent, tag, attrs, text) {
    const el = document.createElementNS(NS, tag);
    for (const k in attrs) el.setAttribute(k, attrs[k]);
    if (text) el.textContent = text;
    parent.appendChild(el);
    return el;
}

// 3D balls of the measure buttons: "cx,cy,r,color ..."
document.querySelectorAll("[data-balls]").forEach(svg => {
    const shine = svg.classList.contains("flat") ? "url(#shineFlat)" : "url(#shine)";
    svg.dataset.balls.split(" ").forEach(b => {
        const [cx, cy, r, fill] = b.split(",");
        add(svg, "circle", { cx, cy, r, fill });
        add(svg, "circle", { cx, cy, r, fill: shine });
    });
});

const satColors = ["#e6e6e6", "#cfcfcf", "#b0b0b0", "#959595", "#868686", "#6a6a6a", "#585858", "#484848", "#303030"];

function background(svg) {
    add(svg, "rect", { width: W, height: H, fill: "url(#gGray)" });
    for (let i = 0; i < 10; i++) add(svg, "path", { d: `M${Math.round(i * W / 10)}.5 0V${H}`, stroke: "#003c3c" });
}

function hline(svg, y) {
    add(svg, "path", { d: `M0 ${Math.round(y)}.5H${W}`, stroke: "#003c3c" });
}

function satLabels(svg, y) {
    satColors.forEach((fill, i) => add(svg, "text", { x: (i + 1) * W / 10 + 3, y, fill }, `${(i + 1) * 10}% Sat`));
}

function series(svg, color, ys, dashed) {
    const pts = ys.map((y, i) => [i * W / 4, y]);
    add(svg, "polyline", {
        points: pts.map(p => `${p[0]},${p[1] + 1}`).join(" "), fill: "none", stroke: color,
        "stroke-width": dashed ? 1 : 2, "stroke-dasharray": dashed ? "4 3" : "none"
    });
    pts.forEach(p => add(svg, "rect", { x: p[0] - 5, y: p[1] - 5, width: 10, height: 10, fill: color }));
}

function captions(svg, title, x) {
    add(svg, "text", { class: "mark", x: W - 12, y: 380 }, "hcfr.sourceforge.net");
    add(svg, "text", { class: "head", x, y: 18 }, title);
}

const lum = document.getElementById("luminance");
background(lum);
for (let i = 1; i < 10; i++) {
    hline(lum, i * H / 10);
    add(lum, "text", { x: 3, y: i * H / 10 - 4, fill: "#aaa" }, `${100 - i * 10}%`);
}
satLabels(lum, 428);
captions(lum, "Saturation Sweep Luminance", 358);
series(lum, "#808000", [30, 32, 32, 31, 31], true);
series(lum, "#008080", [90, 90, 92, 91, 92], true);
series(lum, "#008000", [123, 121, 122, 122, 123], true);
series(lum, "#800080", [310, 307, 308, 308, 309], true);
series(lum, "#800000", [340, 340, 340, 341, 341], true);
series(lum, "#000080", [401, 401, 401, 401, 402], true);
series(lum, "#ff0000", [266, 268, 265, 265, 273]);
series(lum, "#0000ff", [372, 373, 373, 375, 381]);

const sh = document.getElementById("shifts");
background(sh);
for (let i = 1; i < 8; i++) {
    if (i != 4) hline(sh, i * 27);
    add(sh, "text", { x: 3, y: i * 27 - 5, fill: "#aaa" }, `${20 - i * 5}%`);
}
for (let i = 1; i < 10; i++) {
    hline(sh, 217 + i * 21.6);
    add(sh, "text", { x: 3, y: 217 + i * 21.6 - 4, fill: "#bbb" }, `${20 - i * 2}`);
}
satLabels(sh, 212);
satLabels(sh, 428);
captions(sh, "Saturation Scan Shifts", 346);

// the upper plot is cut off where the lower one begins
const clip = add(sh, "clipPath", { id: "upper" });
add(clip, "rect", { width: W, height: 217 });
const top1 = add(sh, "g", { "clip-path": "url(#upper)" });
add(top1, "path", { d: "M0 108.5H686", stroke: "#00504f" });
add(top1, "path", { d: "M0 108.5H686", stroke: "#e0e0e0", "stroke-dasharray": "4 3" });
add(top1, "rect", { x: 0, y: 103, width: 5, height: 10, fill: "#e8e8e8" });
add(top1, "rect", { x: 681, y: 103, width: 5, height: 10, fill: "#e8e8e8" });
series(top1, "#ff0000", [86, 96, 102, 125, 122]);
series(top1, "#00ff00", [59, 82, 93, 122, 141]);
series(top1, "#0000ff", [135, 152, 159, 148, 125]);
series(top1, "#ffff00", [35, 42, 67, 102, 118]);
series(top1, "#00ffff", [207, 209, 208, 220, 203]);
series(top1, "#ff00ff", [173, 190, 175, 168, 153]);

series(sh, "#ff0000", [273, 287, 284, 286, 296]);
series(sh, "#00ff00", [258, 294, 289, 289, 287]);
series(sh, "#0000ff", [317, 324, 330, 330, 346]);
series(sh, "#ffff00", [260, 285, 295, 301, 300]);
series(sh, "#00ffff", [268, 269, 272, 275, 281]);
series(sh, "#ff00ff", [275, 287, 295, 312, 316]);
```
